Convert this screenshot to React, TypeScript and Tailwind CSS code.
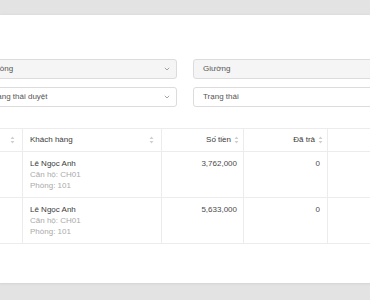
import { ReactNode } from "react";

function Chevron() {
  return (
    <svg width="6" height="4" viewBox="0 0 6 4" className="shrink-0">
      <path d="M0.8 0.8 L3 3 L5.2 0.8" fill="none" stroke="#9a9a9a" strokeWidth="0.9" />
    </svg>
  );
}

function SortIcon() {
  return (
    <svg width="5" height="8" viewBox="0 0 5 8" className="shrink-0">
      <path d="M2.5 0.5 L4.5 3 L0.5 3 Z" fill="#d0d0d0" />
      <path d="M2.5 7.5 L4.5 5 L0.5 5 Z" fill="#d0d0d0" />
    </svg>
  );
}

type SelectProps = {
  label: string;
  filled?: boolean;
};

function FakeSelect({ label, filled }: SelectProps) {
  return (
    <div
      className={`flex h-[20px] items-center justify-between rounded-[3px] border border-[#dcdcdc] pl-[9px] pr-[6px] text-[8px] text-[#555] ${
        filled ? "bg-[#f5f5f5]" : "bg-white"
      }`}
    >
      <span className="whitespace-nowrap">{label}</span>
      <Chevron />
    </div>
  );
}

function Th({ children, right }: { children?: ReactNode; right?: boolean }) {
  return (
    <div
      className={`flex h-[22px] items-center gap-[3px] border-r border-[#ececec] px-[7px] text-[8px] text-[#3a3a3a] ${
        right ? "justify-end pr-[4px]" : "justify-between"
      }`}
    >
      {children}
    </div>
  );
}

const ROWS = [
  { name: "Lê Ngọc Anh", unit: "CH01", room: "101", amount: "3,762,000", paid: "0" },
  { name: "Lê Ngọc Anh", unit: "CH01", room: "101", amount: "5,633,000", paid: "0" },
];

export default function App() {
  return (
    <div
      className="h-[300px] w-[370px] overflow-hidden bg-[#e3e3e3] pt-[15px]"
      style={{ fontFamily: '"Liberation Sans", Arial, sans-serif' }}
    >
      <div className="h-[269px] overflow-hidden border-b border-[#d8d8d8] bg-white pt-[44px] shadow-[0_0_3px_rgba(0,0,0,0.06)]">
        <div className="ml-[-20px] grid w-[410px] grid-cols-2 gap-x-[16px] gap-y-[8px]">
          <FakeSelect label="Phòng" filled />
          <FakeSelect label="Giường" filled />
          <FakeSelect label="Trạng thái duyệt" />
          <FakeSelect label="Trạng thái" />
        </div>

        <div className="ml-[-40px] mt-[21px] w-[470px] border-t border-[#ececec]">
          <div className="grid grid-cols-[63px_139px_82px_84px_102px] border-b border-[#ececec]">
            <Th>
              <span />
              <SortIcon />
            </Th>
            <Th>
              <span>Khách hàng</span>
              <SortIcon />
            </Th>
            <Th right>
              <span>Số tiền</span>
              <SortIcon />
            </Th>
            <Th right>
              <span>Đã trả</span>
              <SortIcon />
            </Th>
            <Th />
          </div>
          {ROWS.map((row, i) => (
            <div
              key={i}
              className="grid h-[46px] grid-cols-[63px_139px_82px_84px_102px] border-b border-[#ececec] text-[8px] leading-[11px]"
            >
              <div className="border-r border-[#ececec]" />
              <div className="border-r border-[#ececec] px-[7px] pt-[6px]">
                <div className="text-[#3a3a3a]">{row.name}</div>
                <div className="text-[#aaa]">Căn hộ: {row.unit}</div>
                <div className="text-[#aaa]">Phòng: {row.room}</div>
              </div>
              <div className="border-r border-[#ececec] pr-[6px] pt-[6px] text-right text-[#4a4a4a]">{row.amount}</div>
              <div className="border-r border-[#ececec] pr-[7px] pt-[6px] text-right text-[#4a4a4a]">{row.paid}</div>
              <div className="border-r border-[#ececec]" />
            </div>
          ))}
        </div>
      </div>
    </div>
  );
}
